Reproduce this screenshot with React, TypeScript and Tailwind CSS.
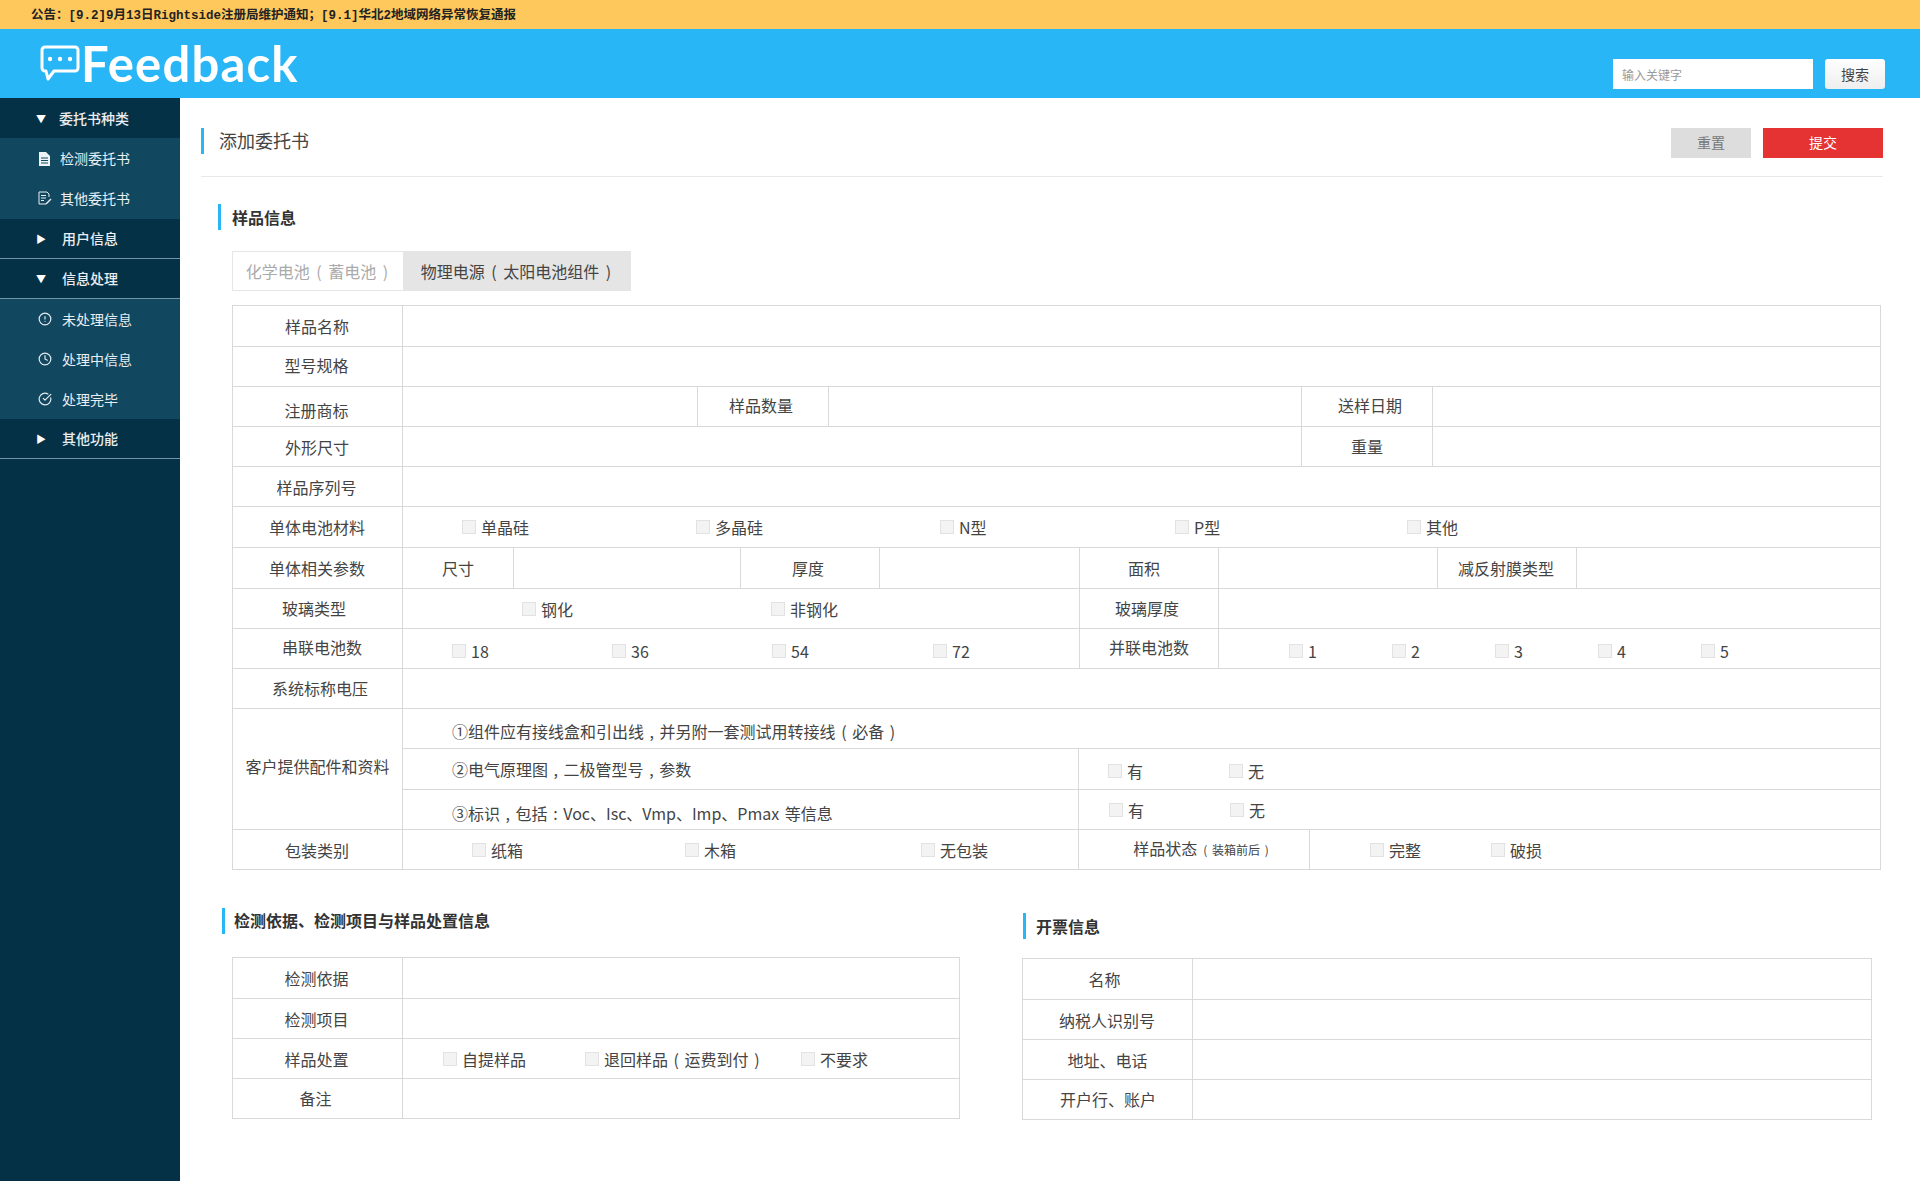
import { AlertCircle, Clock, CheckCircle } from 'lucide-react';

const border = 'border-[#d9d9d9]';

function Check({ label, className = '' }: { label: string; className?: string }) {
  return (
    <span className={`inline-flex items-center gap-[5px] ${className}`}>
      <input type="checkbox" disabled className="h-[14px] w-[14px] appearance-none border border-[#e2e2e2] bg-[#f3f3f3]" />
      <span className="leading-[20px]">{label}</span>
    </span>
  );
}

function Row({ children, h = 'h-[40px]', last }: { children: React.ReactNode; h?: string; last?: boolean }) {
  return <div className={`flex ${h} ${last ? '' : `border-b ${border}`}`}>{children}</div>;
}

function Label({ children, w, tx = '' }: { children: React.ReactNode; w: string; tx?: string }) {
  return (
    <div className={`flex shrink-0 items-center justify-center border-r ${border} ${w} ${tx}`}>
      <span>{children}</span>
    </div>
  );
}

function Heading({ children }: { children: React.ReactNode }) {
  return (
    <div className="flex h-[26px] items-center border-l-[3px] border-[#29b6f6] pl-[11px] text-[16px] font-bold text-[#333]">
      {children}
    </div>
  );
}

function SideHead({ open, children, line, w = 'w-[26px]' }: { open?: boolean; children: React.ReactNode; line?: boolean; w?: string }) {
  return (
    <div className={`flex h-[40px] items-center text-[14px] font-medium text-[#e8eef1] ${line ? 'border-b border-[#6f95a6]' : ''}`}>
      <span className={`ml-[36px] text-[10px] text-white ${w}`}>{open ? '▼' : '▶'}</span>
      {children}
    </div>
  );
}

function SideItem({ icon, children, h = 'h-[40px]', w = 'w-[24px]' }: { icon: React.ReactNode; children: React.ReactNode; h?: string; w?: string }) {
  return (
    <div className={`flex items-center text-[14px] text-[#e8eef1] ${h}`}>
      <span className={`ml-[38px] flex items-center ${w}`}>{icon}</span>
      {children}
    </div>
  );
}

function DocIcon() {
  return (
    <svg width="13" height="14" viewBox="0 0 13 14">
      <path d="M1 0h7l4 4v10H1z" fill="#eef3f5" />
      <path d="M3 6h7M3 8.5h7M3 11h7" stroke="#124760" strokeWidth="1" />
    </svg>
  );
}

function EditDocIcon() {
  return (
    <svg width="14" height="14" viewBox="0 0 14 14" fill="none" stroke="#e8eef1">
      <path d="M8 13H1V1h8l2 2v3" />
      <path d="M3 4.5h5M3 7h5M3 9.5h3" />
      <path d="M8 13l5-5" strokeWidth="1.4" />
    </svg>
  );
}

export default function App() {
  return (
    <div className="flex min-h-[1181px] flex-col bg-white text-[16px] text-[#444]" style={{ fontFamily: '"Noto Sans CJK SC", "Noto Sans", sans-serif' }}>
      <div className="flex h-[29px] items-center bg-[#ffc85c] pl-[31px] pt-[3px] text-[12.5px] font-bold text-[#222]" style={{ fontFamily: '"Liberation Mono", "Noto Sans CJK SC", monospace' }}>
        {'公告\uFF1A[9.2]9月13日Rightside注册局维护通知\uFF1B[9.1]华北2地域网络异常恢复通报'}
      </div>

      <header className="flex h-[69px] items-start justify-between bg-[#29b6f6]">
        <div className="ml-[40px] mt-[14px] flex items-start">
          <svg width="40" height="36" viewBox="0 0 40 36" fill="none" stroke="white" strokeWidth="3" strokeLinejoin="round" className="mt-[2px]">
            <path d="M5 2h30a3 3 0 0 1 3 3v18a3 3 0 0 1-3 3H14l-6 8-2-8H5a3 3 0 0 1-3-3V5a3 3 0 0 1 3-3z" />
            <circle cx="10" cy="14" r="2.2" fill="white" stroke="none" />
            <circle cx="20" cy="14" r="2.2" fill="white" stroke="none" />
            <circle cx="30" cy="14" r="2.2" fill="white" stroke="none" />
          </svg>
          <span className="ml-[1px] -mt-[5px] text-[49px] leading-[50px] font-bold tracking-[1.2px] text-white" style={{ fontFamily: 'Lato, sans-serif' }}>Feedback</span>
        </div>
        <div className="mr-[35px] mt-[30px] flex items-center">
          <input placeholder="输入关键字" className="h-[30px] w-[200px] bg-white px-[9px] text-[12px] outline-none placeholder:text-[#999]" />
          <button className="ml-[12px] h-[30px] w-[60px] rounded-[3px] bg-gradient-to-b from-white to-[#eeeeee] text-[14px] text-[#444]">搜索</button>
        </div>
      </header>

      <div className="flex flex-1">
        <aside className="w-[180px] shrink-0 bg-[#053146]">
          <SideHead open w="w-[23px]">委托书种类</SideHead>
          <div className="bg-[#124760]">
            <SideItem h="h-[41px]" w="w-[22px]" icon={<DocIcon />}>检测委托书</SideItem>
            <SideItem h="h-[40px] pb-[2px]" w="w-[22px]" icon={<EditDocIcon />}>其他委托书</SideItem>
          </div>
          <SideHead line>用户信息</SideHead>
          <SideHead open line>信息处理</SideHead>
          <div className="bg-[#124760]">
            <SideItem icon={<AlertCircle size={14} />}>未处理信息</SideItem>
            <SideItem icon={<Clock size={14} />}>处理中信息</SideItem>
            <SideItem icon={<CheckCircle size={14} />}>处理完毕</SideItem>
          </div>
          <SideHead line>其他功能</SideHead>
        </aside>

        <main className="min-w-0 flex-1 pl-[21px] pr-[20px] [word-spacing:2px]">
          <div className="mr-[17px] flex h-[79px] items-start justify-between border-b border-[#e8e8e8] pt-[30px]">
            <div className="flex h-[26px] items-center border-l-[3px] border-[#29b6f6] pb-[2px] pl-[15px] text-[18px] text-[#444]">添加委托书</div>
            <div className="flex gap-[12px] text-[14px]">
              <button className="h-[30px] w-[80px] bg-[#dddddd] pb-[2px] text-[#777]">重置</button>
              <button className="h-[30px] w-[120px] bg-[#e53333] pb-[2px] text-white">提交</button>
            </div>
          </div>

          <div className="ml-[17px] mt-[27px]"><Heading>样品信息</Heading></div>

          <div className="ml-[31px] mt-[21px] flex h-[40px] w-[399px] [word-spacing:3px]">
            <div className="flex w-[171px] items-center justify-center border border-r-0 border-[#e6e6e6] pr-[2px] text-[#aaa]">化学电池 ( 蓄电池 )</div>
            <div className="flex flex-1 items-center justify-center bg-[#e5e5e5] pr-[2px] text-[#444]">物理电源 ( 太阳电池组件 )</div>
          </div>

          <div className={`ml-[31px] mt-[14px] w-[1649px] border ${border}`}>
            <Row h="h-[41px]"><Label w="w-[170px]" tx="pr-[1px]">样品名称</Label></Row>
            <Row><Label w="w-[170px]" tx="pb-[3px] pr-[2px]">型号规格</Label></Row>
            <Row>
              <Label w="w-[170px]" tx="pr-[2px]"><span className="relative top-[3px]">注册商标</span></Label>
              <div className={`w-[295px] border-r ${border}`} />
              <Label w="w-[131px]" tx="pb-[3px] pr-[4px]">样品数量</Label>
              <div className={`w-[473px] border-r ${border}`} />
              <Label w="w-[131px]" tx="pb-[3px] pl-[6px]">送样日期</Label>
            </Row>
            <Row>
              <Label w="w-[170px]" tx="pr-[1px]">外形尺寸</Label>
              <div className={`w-[899px] border-r ${border}`} />
              <Label w="w-[131px]" tx="pb-[1px]">重量</Label>
            </Row>
            <Row><Label w="w-[170px]" tx="pr-[2px]">样品序列号</Label></Row>
            <Row h="h-[41px]">
              <Label w="w-[170px]" tx="pr-[1px]">单体电池材料</Label>
              <div className="relative flex flex-1 items-center pl-[59px]">
                <Check label="单晶硅" className="w-[234px]" />
                <Check label="多晶硅" className="w-[244px]" />
                <Check label="N型" className="w-[235px]" />
                <Check label="P型" className="w-[232px]" />
                <Check label="其他" />
              </div>
            </Row>
            <Row h="h-[41px]">
              <Label w="w-[170px]" tx="pr-[1px]">单体相关参数</Label>
              <Label w="w-[111px]">尺寸</Label>
              <div className={`w-[227px] border-r ${border}`} />
              <Label w="w-[139px]" tx="pr-[4px]">厚度</Label>
              <div className={`w-[200px] border-r ${border}`} />
              <Label w="w-[139px]" tx="pr-[10px]">面积</Label>
              <div className={`w-[219px] border-r ${border}`} />
              <Label w="w-[139px]" tx="pr-[2px]">减反射膜类型</Label>
            </Row>
            <Row>
              <Label w="w-[170px]" tx="pb-[2px] pr-[7px]">玻璃类型</Label>
              <div className={`flex w-[677px] items-center border-r ${border} pl-[119px]`}>
                <Check label="钢化" className="w-[249px]" />
                <Check label="非钢化" />
              </div>
              <Label w="w-[139px]" tx="pb-[2px] pr-[4px]">玻璃厚度</Label>
            </Row>
            <Row>
              <Label w="w-[170px]" tx="pb-[3px] pl-[9px]">串联电池数</Label>
              <div className={`flex w-[677px] items-center border-r ${border} pl-[49px] pt-[4px]`}>
                <Check label="18" className="w-[160px]" />
                <Check label="36" className="w-[160px]" />
                <Check label="54" className="w-[161px]" />
                <Check label="72" />
              </div>
              <Label w="w-[139px]" tx="pb-[3px]">并联电池数</Label>
              <div className="flex flex-1 items-center pl-[70px] pt-[4px]">
                {['1', '2', '3', '4', '5'].map(n => <Check key={n} label={n} className="w-[103px]" />)}
              </div>
            </Row>
            <Row><Label w="w-[170px]" tx="pb-[2px] pl-[5px]">系统标称电压</Label></Row>
            <div className={`flex h-[121px] border-b ${border}`}>
              <Label w="w-[170px]" tx="pb-[7px]">客户提供配件和资料</Label>
              <div className="flex flex-1 flex-col">
                <div className={`flex h-[40px] items-center border-b ${border} pl-[49px] pt-[5px]`}>①组件应有接线盒和引出线 , 并另附一套测试用转接线 ( 必备 )</div>
                <div className={`flex h-[41px] border-b ${border}`}>
                  <div className={`flex w-[676px] items-center border-r ${border} pl-[49px]`}>②电气原理图 , 二极管型号 , 参数</div>
                  <div className="flex items-center pl-[29px] pt-[3px]">
                    <Check label="有" className="w-[121px]" />
                    <Check label="无" />
                  </div>
                </div>
                <div className="flex flex-1">
                  <div className={`flex w-[676px] items-center border-r ${border} pl-[49px] pt-[6px]`}>③标识 , 包括 : Voc、Isc、Vmp、Imp、Pmax 等信息</div>
                  <div className="flex items-center pl-[30px]">
                    <Check label="有" className="w-[121px]" />
                    <Check label="无" />
                  </div>
                </div>
              </div>
            </div>
            <Row last h="h-[39px]">
              <Label w="w-[170px]" tx="pr-[1px]">包装类别</Label>
              <div className={`flex w-[676px] items-center border-r ${border} pl-[69px]`}>
                <Check label="纸箱" className="w-[213px]" />
                <Check label="木箱" className="w-[236px]" />
                <Check label="无包装" />
              </div>
              <Label w="w-[231px]" tx="pb-[3px] pl-[14px]"><span>样品状态<span className="ml-[6px] text-[12px]">( 装箱前后 )</span></span></Label>
              <div className="flex items-center pl-[60px]">
                <Check label="完整" className="w-[121px]" />
                <Check label="破损" />
              </div>
            </Row>
          </div>

          <div className="mt-[38px] flex">
            <div className="ml-[21px] w-[801px]">
              <Heading><span className="-ml-[2px] pb-[2px]">检测依据、检测项目与样品处置信息</span></Heading>
              <div className={`ml-[10px] mt-[23px] w-[728px] border ${border}`}>
                <Row h="h-[41px]"><Label w="w-[170px]" tx="pr-[2px]">检测依据</Label></Row>
                <Row><Label w="w-[170px]" tx="pr-[2px]">检测项目</Label></Row>
                <Row>
                  <Label w="w-[170px]" tx="pr-[2px]">样品处置</Label>
                  <div className="flex items-center pl-[40px]">
                    <Check label="自提样品" className="w-[142px]" />
                    <Check label="退回样品 ( 运费到付 )" className="w-[216px]" />
                    <Check label="不要求" />
                  </div>
                </Row>
                <Row last h="h-[39px]"><Label w="w-[170px]" tx="pb-[1px] pr-[4px]">备注</Label></Row>
              </div>
            </div>
            <div className="mt-[5px] w-[857px]">
              <Heading><span className="-ml-[1px]">开票信息</span></Heading>
              <div className={`-ml-[1px] mt-[19px] w-[850px] border ${border}`}>
                <Row h="h-[41px]"><Label w="w-[170px]" tx="pr-[6px]">名称</Label></Row>
                <Row><Label w="w-[170px]" tx="pr-[1px]">纳税人识别号</Label></Row>
                <Row><Label w="w-[170px]">地址、电话</Label></Row>
                <Row last h="h-[39px]"><Label w="w-[170px]" tx="pb-[2px] pl-[1px]">开户行、账户</Label></Row>
              </div>
            </div>
          </div>
        </main>
      </div>
    </div>
  );
}
